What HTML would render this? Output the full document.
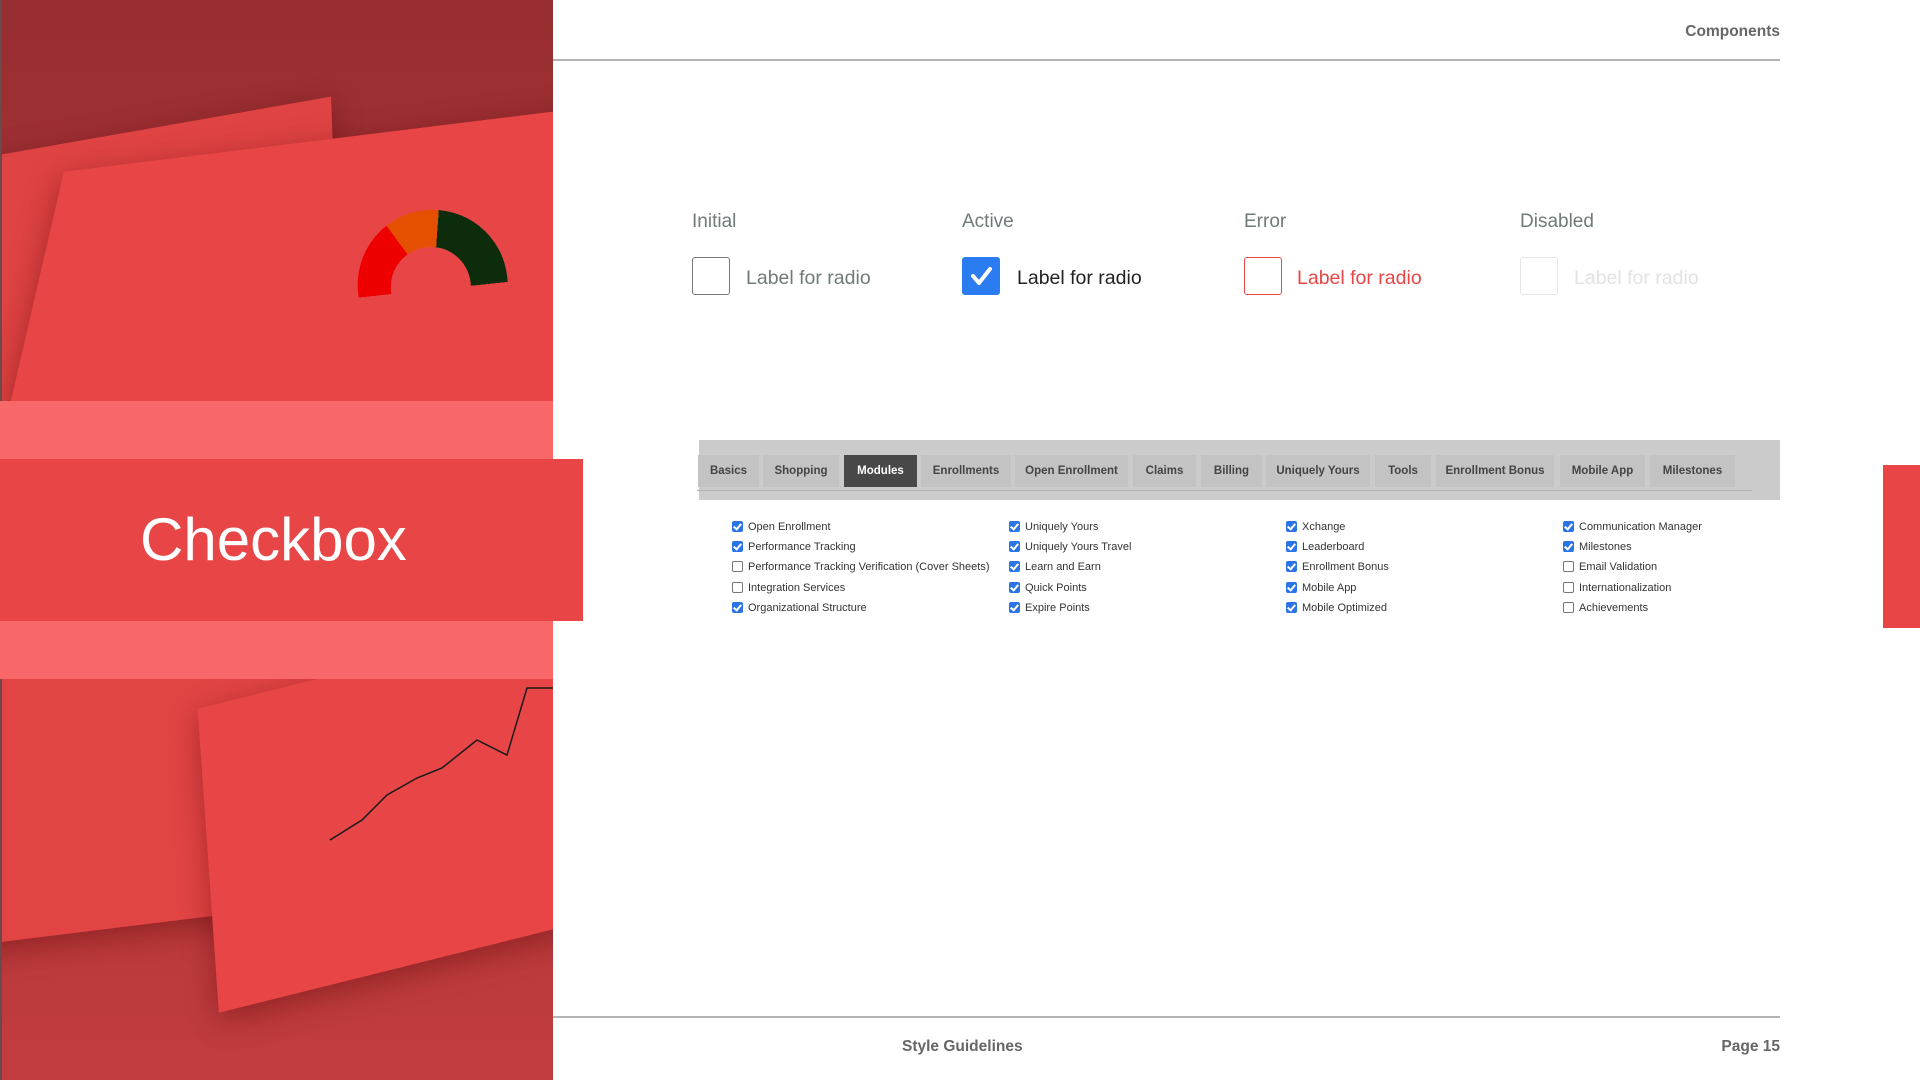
<!DOCTYPE html>
<html><head><meta charset="utf-8"><style>
*{margin:0;padding:0;box-sizing:border-box}
body{width:1920px;height:1080px;background:#fff;position:relative;overflow:hidden;font-family:"Liberation Sans",sans-serif}
.abs{position:absolute}
#left{left:0;top:0;width:553px;height:1080px;overflow:hidden;background:linear-gradient(180deg,#982e31 0%,#a83336 40%,#c13c3e 100%);border-left:2px solid #6a4a4a}
.scr{position:absolute;background:#e84646;box-shadow:0 8px 30px rgba(80,0,0,.4)}
.band{left:0;top:401px;width:553px;height:278px;background:#f96868}
.title{left:0;top:459px;width:583px;height:162px;background:#e84646;color:#fff;font-size:60px;text-align:left;padding-left:140px;line-height:162px}
.hdr{color:#666;font-weight:bold;font-size:15.5px}
.line{background:#b3b3b3;height:2px}
.st{font-size:19px;color:#6e7b79;top:211px}
.cb{width:38px;height:38px;top:257px;border-radius:3px}
.lb{font-size:19.5px;top:267px}
.tabbar{left:699px;top:440px;width:1081px;height:60px;background:#cbcbcb}
.tab{position:absolute;top:15px;height:32px;background:#c3c3c3;font-size:11.5px;font-weight:bold;color:#444;line-height:32px;text-align:center}
.tab.on{background:#484848;color:#fff}
.it{position:absolute;font-size:11px;color:#333;height:14px;line-height:14px;padding-left:16px;white-space:nowrap}
.it:before{content:"";position:absolute;left:0;top:1px;width:11px;height:11px;border-radius:2px;border:1px solid #777;background:#fff;box-sizing:border-box}
.it.c:before{background:#2b74e6;border-color:#2b74e6}
.it.c:after{content:"";position:absolute;left:3px;top:2px;width:3px;height:6px;border:solid #fff;border-width:0 2px 2px 0;transform:rotate(40deg)}
</style></head><body>
<div id="left" class="abs">
 <div class="scr" style="left:-60px;top:130px;width:400px;height:620px;transform:skewY(-8deg) rotate(-2deg);background:#e04343"></div>
 <div class="scr" style="left:20px;top:140px;width:620px;height:330px;transform:rotate(-7deg) skewX(-20deg)"></div>
 <div class="abs" style="left:352px;top:210px;width:150px;height:80px;border-radius:80px 80px 0 0;background:conic-gradient(from -90deg at 50% 100%,#e00 0 60deg,#e55000 60deg 100deg,#0c2c0c 100deg 180deg,transparent 180deg);transform:rotate(-6deg)"></div>
 <div class="abs" style="left:387px;top:247px;width:80px;height:45px;border-radius:45px 45px 0 0;background:#e84646;transform:rotate(-6deg)"></div>
 <div class="scr" style="left:-20px;top:660px;width:380px;height:260px;transform:rotate(-7deg) skewX(-15deg);background:#e24444"></div>
 <div class="scr" style="left:200px;top:660px;width:420px;height:300px;transform:rotate(-14deg) skewX(-10deg)"></div>
 <svg class="abs" style="left:320px;top:680px" width="240" height="180"><polyline points="8,160 40,140 65,115 95,98 120,88 155,60 185,75 205,8 240,8" fill="none" stroke="#1a1a1a" stroke-width="1.5"/></svg>
</div>
<div class="abs band"></div>
<div class="abs title">Checkbox</div>
<div class="abs" style="left:1883px;top:465px;width:37px;height:163px;background:#e84646"></div>

<div class="abs hdr" style="right:140px;top:23px">Components</div>
<div class="abs line" style="left:553px;top:59px;width:1227px"></div>
<div class="abs line" style="left:553px;top:1016px;width:1227px"></div>
<div class="abs hdr" style="left:902px;top:1038px">Style Guidelines</div>
<div class="abs hdr" style="right:140px;top:1038px">Page 15</div>

<div class="abs st" style="left:692px">Initial</div>
<div class="abs st" style="left:962px">Active</div>
<div class="abs st" style="left:1244px">Error</div>
<div class="abs st" style="left:1520px">Disabled</div>

<div class="abs cb" style="left:692px;border:1.5px solid #777"></div>
<div class="abs lb" style="left:746px;color:#6e7b79">Label for radio</div>
<div class="abs cb" style="left:962px;background:#2b7cf0"><svg width="38" height="38"><path d="M11 19 L17 26 L28 12" fill="none" stroke="#fff" stroke-width="4" stroke-linecap="round" stroke-linejoin="round"/></svg></div>
<div class="abs lb" style="left:1017px;color:#222">Label for radio</div>
<div class="abs cb" style="left:1244px;border:1.5px solid #e84646"></div>
<div class="abs lb" style="left:1297px;color:#e84646">Label for radio</div>
<div class="abs cb" style="left:1520px;border:1.5px solid #e6e6e6"></div>
<div class="abs lb" style="left:1574px;color:#e2e2e2">Label for radio</div>

<div class="abs tabbar">
 <div class="tab" style="left:-1px;width:61px">Basics</div>
 <div class="tab" style="left:64px;width:76px">Shopping</div>
 <div class="tab on" style="left:145px;width:73px">Modules</div>
 <div class="tab" style="left:222px;width:90px">Enrollments</div>
 <div class="tab" style="left:316px;width:113px">Open Enrollment</div>
 <div class="tab" style="left:434px;width:63px">Claims</div>
 <div class="tab" style="left:502px;width:61px">Billing</div>
 <div class="tab" style="left:567px;width:104px">Uniquely Yours</div>
 <div class="tab" style="left:676px;width:56px">Tools</div>
 <div class="tab" style="left:737px;width:118px">Enrollment Bonus</div>
 <div class="tab" style="left:861px;width:85px">Mobile App</div>
 <div class="tab" style="left:951px;width:85px">Milestones</div>
 <div class="abs" style="left:-2px;top:50px;width:1055px;height:1px;background:#b0b0b0"></div>
</div>

<div class="it c" style="left:732px;top:520px">Open Enrollment</div>
<div class="it c" style="left:732px;top:540px">Performance Tracking</div>
<div class="it" style="left:732px;top:560px">Performance Tracking Verification (Cover Sheets)</div>
<div class="it" style="left:732px;top:581px">Integration Services</div>
<div class="it c" style="left:732px;top:601px">Organizational Structure</div>
<div class="it c" style="left:1009px;top:520px">Uniquely Yours</div>
<div class="it c" style="left:1009px;top:540px">Uniquely Yours Travel</div>
<div class="it c" style="left:1009px;top:560px">Learn and Earn</div>
<div class="it c" style="left:1009px;top:581px">Quick Points</div>
<div class="it c" style="left:1009px;top:601px">Expire Points</div>
<div class="it c" style="left:1286px;top:520px">Xchange</div>
<div class="it c" style="left:1286px;top:540px">Leaderboard</div>
<div class="it c" style="left:1286px;top:560px">Enrollment Bonus</div>
<div class="it c" style="left:1286px;top:581px">Mobile App</div>
<div class="it c" style="left:1286px;top:601px">Mobile Optimized</div>
<div class="it c" style="left:1563px;top:520px">Communication Manager</div>
<div class="it c" style="left:1563px;top:540px">Milestones</div>
<div class="it" style="left:1563px;top:560px">Email Validation</div>
<div class="it" style="left:1563px;top:581px">Internationalization</div>
<div class="it" style="left:1563px;top:601px">Achievements</div>
</body></html>
